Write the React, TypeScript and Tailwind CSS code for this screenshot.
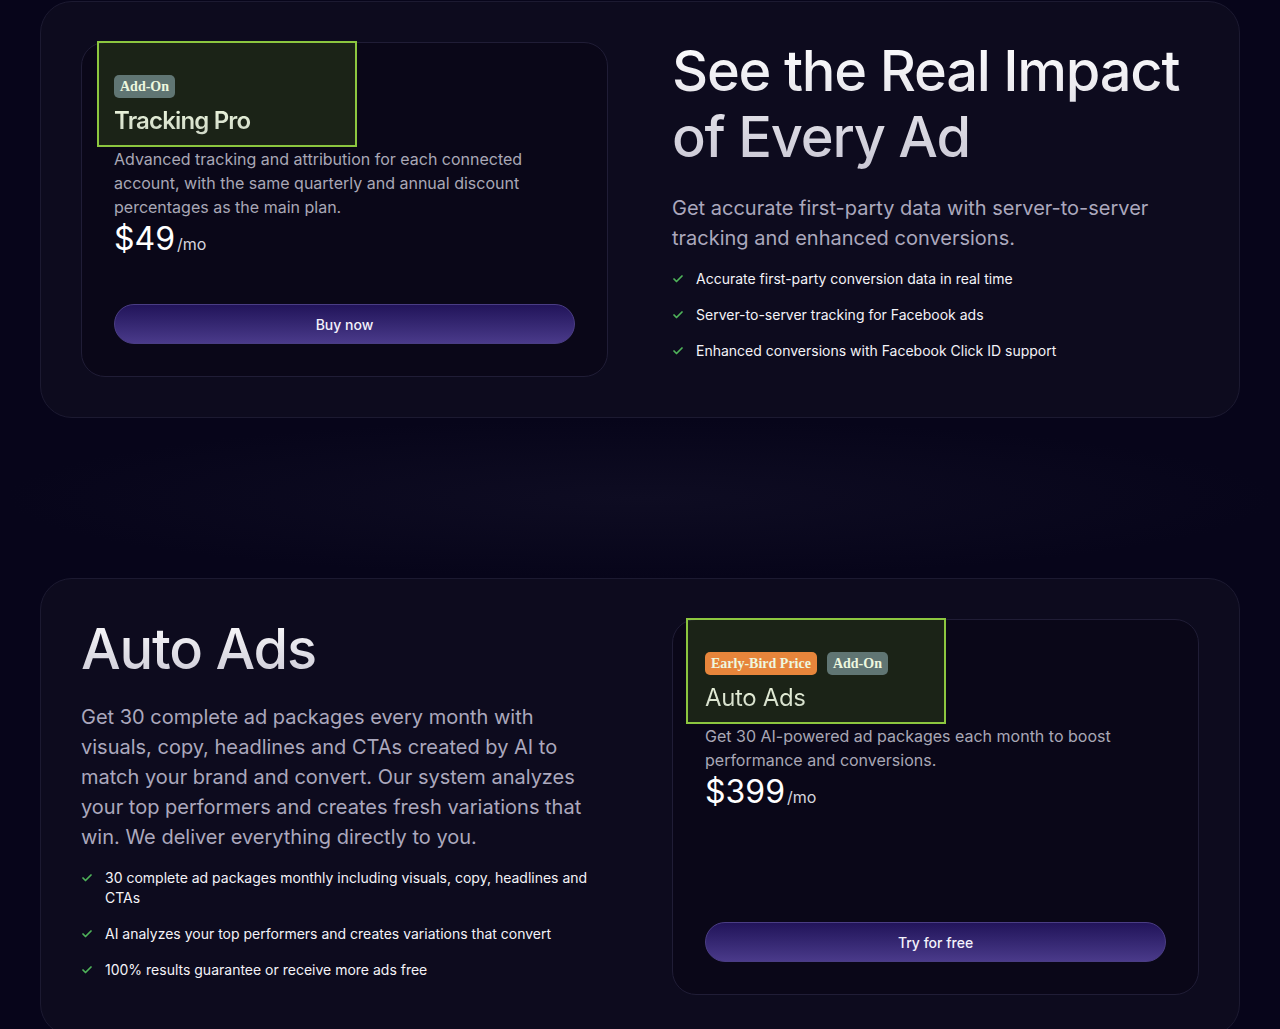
import React from "react";
import { Check } from "lucide-react";

const sans = "font-['Inter','Noto_Sans',sans-serif]";

function Badge({ label, tone }: { label: string; tone: "slate" | "orange" }) {
  return (
    <span
      className={`inline-flex h-[23px] items-center rounded-[5px] px-[6px] font-['Liberation_Serif',serif] text-[14px] font-bold text-white ${
        tone === "orange" ? "bg-[#f77a42]" : "bg-[#5a6783]"
      }`}
    >
      {label}
    </span>
  );
}

function Feature({ children }: { children: React.ReactNode }) {
  return (
    <li className="flex items-start gap-3 text-[14px] leading-5 text-[#f4f3f8]">
      <Check className="mt-[4px] h-3 w-3 shrink-0 text-[#4fb35a]" strokeWidth={3.5} />
      <span>{children}</span>
    </li>
  );
}

function PlanCard({
  badges,
  title,
  bold,
  description,
  price,
  cta,
  gap,
  overlayLeft,
}: {
  badges: { label: string; tone: "slate" | "orange" }[];
  title: string;
  bold?: boolean;
  description: string;
  price: string;
  cta: string;
  gap: string;
  overlayLeft: string;
}) {
  return (
    <div className="rounded-3xl border border-[#201d36] bg-[#0a0718] p-8">
      <div className="relative">
        <div className="flex gap-2.5">
          {badges.map((b) => (
            <Badge key={b.label} label={b.label} tone={b.tone} />
          ))}
        </div>
        <h3
          className={`mt-[7px] bg-gradient-to-b from-white to-[#d8d6e2] bg-clip-text text-[24px] leading-8 text-transparent ${
            bold ? "font-semibold tracking-[-0.035em]" : "font-normal tracking-[-0.015em]"
          }`}
        >
          {title}
        </h3>
        {/* highlight overlay */}
        <div
          className={`pointer-events-none absolute top-[-34px] h-[106px] w-[260px] border-2 border-[#8cc63f] bg-[#84cc16]/[0.14] ${overlayLeft}`}
        />
      </div>
      <p className="mt-2.5 text-[16px] leading-6 text-[#a9a7b6]">{description}</p>
      <div className="flex items-baseline leading-10">
        <span className="text-[32px] font-normal text-white">{price}</span>
        <span className="ml-0.5 text-[16px] text-[#d6d5de]">/mo</span>
      </div>
      <button
        className={`${gap} flex h-10 w-full items-center justify-center rounded-full border border-[#4a3d84] bg-gradient-to-b from-[#22145a] to-[#4a3a8a] text-[14px] font-medium text-[#f3f1fb]`}
      >
        {cta}
      </button>
    </div>
  );
}

function Heading({ children }: { children: React.ReactNode }) {
  return (
    <h2 className="bg-gradient-to-b from-white to-[#c9c7d4] bg-clip-text text-[56px] leading-[66px] font-medium tracking-[-0.022em] text-transparent">
      {children}
    </h2>
  );
}

export default function App() {
  return (
    <div className={`min-h-screen bg-[#07051a] pt-px ${sans}`}>
      <section className="mx-10 rounded-[32px] border border-[#1c1a31] bg-[#0d0b1e] p-10">
        <div className="grid grid-cols-2 gap-16">
          <PlanCard
            badges={[{ label: "Add-On", tone: "slate" }]}
            title="Tracking Pro"
            bold
            description="Advanced tracking and attribution for each connected account, with the same quarterly and annual discount percentages as the main plan."
            price="$49"
            cta="Buy now"
            gap="mt-[40px]"
            overlayLeft="left-[-17px]"
          />
          <div className="-mt-1">
            <Heading>
              See the Real Impact
              <br />
              of Every Ad
            </Heading>
            <p className="mt-[23px] text-[20px] leading-[30px] text-[#aba8bd]">
              Get accurate first-party data with server-to-server tracking and enhanced conversions.
            </p>
            <ul className="mt-4 flex flex-col gap-4">
              <Feature>Accurate first-party conversion data in real time</Feature>
              <Feature>Server-to-server tracking for Facebook ads</Feature>
              <Feature>Enhanced conversions with Facebook Click ID support</Feature>
            </ul>
          </div>
        </div>
      </section>

      <div className="h-[160px] bg-[radial-gradient(ellipse_at_center,#0e0c22_0%,#07051a_70%)]" />

      <section className="mx-10 rounded-[32px] border border-[#1c1a31] bg-[#0d0b1e] p-10">
        <div className="grid grid-cols-2 gap-16">
          <div className="-mt-[3px]">
            <Heading>Auto Ads</Heading>
            <p className="mt-5 text-[20px] leading-[30px] text-[#aba8bd]">
              Get 30 complete ad packages every month with visuals, copy, headlines and CTAs created by AI to match
              your brand and convert. Our system analyzes your top performers and creates fresh variations that win. We
              deliver everything directly to you.
            </p>
            <ul className="mt-4 flex flex-col gap-4">
              <Feature>30 complete ad packages monthly including visuals, copy, headlines and CTAs</Feature>
              <Feature>AI analyzes your top performers and creates variations that convert</Feature>
              <Feature>100% results guarantee or receive more ads free</Feature>
            </ul>
          </div>
          <PlanCard
            badges={[
              { label: "Early-Bird Price", tone: "orange" },
              { label: "Add-On", tone: "slate" },
            ]}
            title="Auto Ads"
            description="Get 30 AI-powered ad packages each month to boost performance and conversions."
            price="$399"
            cta="Try for free"
            gap="mt-[105px]"
            overlayLeft="left-[-19px]"
          />
        </div>
      </section>
    </div>
  );
}
